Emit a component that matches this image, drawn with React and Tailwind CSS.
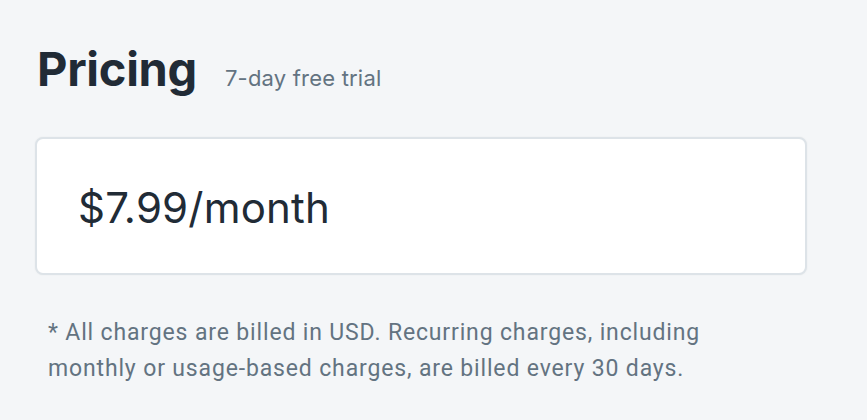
export default function App() {
  return (
    <div className="w-[867px] h-[420px] bg-[#f4f6f8] overflow-hidden" style={{ fontFamily: "Inter, 'Noto Sans', sans-serif" }}>
      <div className="pt-[39px] pl-[37px] flex items-baseline">
        <h1 className="text-[47px] font-bold leading-[60px] text-[#212b36] tracking-[-0.3px]">Pricing</h1>
        <span className="ml-[28px] text-[22px] text-[#637381] tracking-[0.2px]">7-day free trial</span>
      </div>
      <div className="ml-[35px] mt-[38px] w-[772px] h-[138px] bg-white border-2 border-[#dde3e8] rounded-[8px] flex items-center pl-[41px] shadow-[0_0_2px_rgba(0,0,0,0.06)]">
        <span className="text-[42px] text-[#212b36] leading-none tracking-[0.2px] mt-[4px]">$7.99/month</span>
      </div>
      <p className="mt-[40px] ml-[48px] w-[790px] text-[23px] leading-[36px] text-[#637381] tracking-[0.85px]" style={{ fontFamily: "Roboto, sans-serif" }}>
        * All charges are billed in USD. Recurring charges, including
        <br />
        monthly or usage-based charges, are billed every 30 days.
      </p>
    </div>
  );
}
